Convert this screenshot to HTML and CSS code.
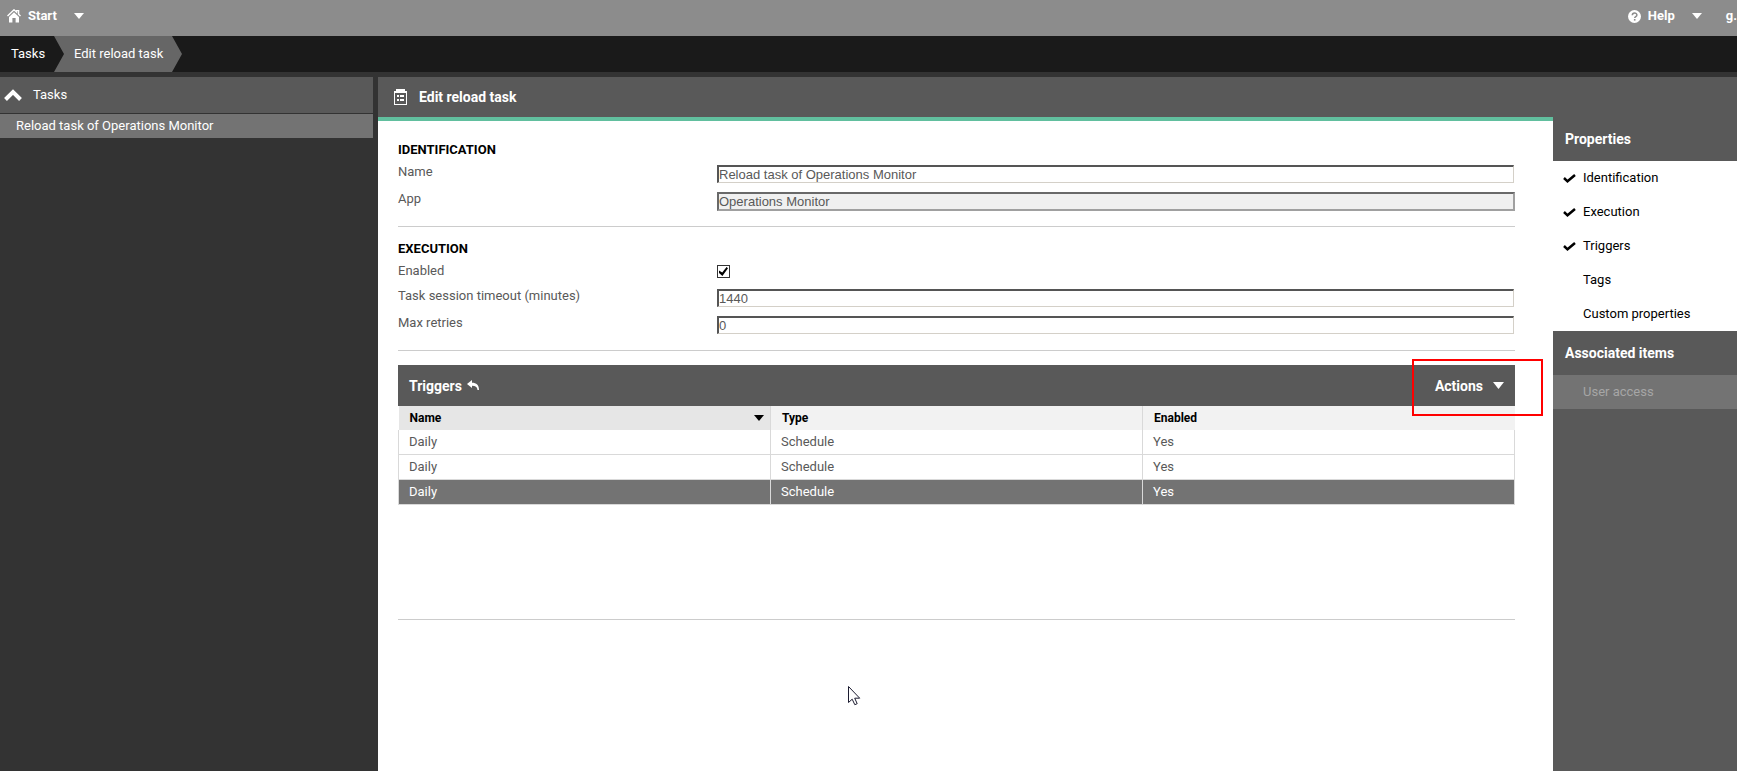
FILE: index.html
```html
<!DOCTYPE html>
<html lang="en">
<head>
<meta charset="utf-8">
<title>Edit reload task</title>
<link rel="stylesheet" href="styles.css">
</head>
<body>
<header class="topbar">
  <button class="menu-button" type="button">
    <svg class="icon-home" width="14" height="14" viewBox="0 0 14 14"><path d="M0.5 7 7 0.8 9.6 3.2V1.6h2v3.6L13.5 7" fill="none" stroke="#fff" stroke-width="1.4"/><path d="M7 3.2 2 8v5.4h3.4V9h3.2v4.4H12V8z" fill="#fff"/></svg>
    <span>Start</span>
    <svg class="caret" width="10" height="6" viewBox="0 0 10 6"><path d="M0 0h10L5 6z" fill="currentColor"/></svg>
  </button>
  <div class="topbar-right">
    <button class="menu-button" type="button">
      <svg class="icon-help" width="13" height="13" viewBox="0 0 13 13"><circle cx="6.500" cy="6.500" r="6.500" fill="#fff"/><path d="M4.300 5.200C4.300 2.300 8.900 2.300 8.900 5c0 1.600-2.200 1.500-2.200 3" fill="none" stroke="#8c8c8c" stroke-width="1.500"/><path d="M5.900 9h1.600v1.600H5.900z" fill="#8c8c8c"/></svg>
      <span>Help</span>
      <svg class="caret" width="10" height="6" viewBox="0 0 10 6"><path d="M0 0h10L5 6z" fill="currentColor"/></svg>
    </button>
    <button class="menu-button user-button" type="button">g.</button>
  </div>
</header>
<nav class="breadcrumb" aria-label="Breadcrumb">
  <a class="crumb crumb-root" href="#">Tasks</a>
  <a class="crumb crumb-current" href="#">Edit reload task</a>
</nav>
<div class="shell">
  <aside class="sidebar">
    <button class="sidebar-head" type="button">
      <svg width="18" height="12" viewBox="0 0 18 12"><path d="M1.500 10.500 9 3l7.500 7.500" fill="none" stroke="#fff" stroke-width="4"/></svg>
      <span>Tasks</span>
    </button>
    <a class="sidebar-item" href="#">Reload task of Operations Monitor</a>
  </aside>
  <main class="workspace">
    <div class="page-head">
      <svg width="13" height="16" viewBox="0 0 13 16"><path d="M0 2h2V0h9v2h2v14H0zM1 4v11h11V4z" fill="#fff" fill-rule="evenodd"/><path d="M3 6h2v2H3zM6 6h4v2H6zM3 10h2v2H3zM6 10h4v2H6z" fill="#fff"/></svg>
      <h1>Edit reload task</h1>
    </div>
    <form class="editor">
      <section class="group">
        <h2>IDENTIFICATION</h2>
        <div class="field"><label for="name">Name</label><input class="text" id="name" type="text" value="Reload task of Operations Monitor"></div>
        <div class="field"><label for="app">App</label><input class="text text-readonly" id="app" type="text" value="Operations Monitor" readonly></div>
      </section>
      <section class="group">
        <h2>EXECUTION</h2>
        <div class="field field-check"><label for="enabled">Enabled</label><input class="check" id="enabled" type="checkbox" checked></div>
        <div class="field"><label for="timeout">Task session timeout (minutes)</label><input class="text" id="timeout" type="text" value="1440"></div>
        <div class="field"><label for="retries">Max retries</label><input class="text" id="retries" type="text" value="0"></div>
      </section>
      <section class="triggers">
        <div class="triggers-head">
          <h3>Triggers</h3>
          <button class="undo" type="button" aria-label="Undo"><svg width="13" height="11" viewBox="0 0 13 11"><path d="M0 4 5 0v2.700c4.500 0 7 2.300 7 7.300h-1.500C10.300 7 8.500 5.700 5 5.700V8z" fill="#fff"/></svg></button>
          <button class="actions" type="button"><span>Actions</span><svg width="11" height="7" viewBox="0 0 11 7"><path d="M0 0h11L5.500 7z" fill="currentColor"/></svg></button>
          <div class="highlight"></div>
        </div>
        <table class="grid">
          <thead><tr>
            <th class="sorted" scope="col"><div class="sort"><span>Name</span><svg width="10" height="6" viewBox="0 0 10 6"><path d="M0 0h10L5 6z"/></svg></div></th>
            <th scope="col">Type</th><th scope="col">Enabled</th>
          </tr></thead>
          <tbody>
            <tr><td>Daily</td><td>Schedule</td><td>Yes</td></tr>
            <tr><td>Daily</td><td>Schedule</td><td>Yes</td></tr>
            <tr class="selected"><td>Daily</td><td>Schedule</td><td>Yes</td></tr>
          </tbody>
        </table>
      </section>
    </form>
    <aside class="panel">
      <h2>Properties</h2>
      <div class="options">
        <button class="option" type="button"><svg width="13" height="9" viewBox="0 0 13 9"><path d="M1 4 4.500 7.300 12 1" fill="none" stroke="#000" stroke-width="2.500"/></svg><span>Identification</span></button>
        <button class="option" type="button"><svg width="13" height="9" viewBox="0 0 13 9"><path d="M1 4 4.500 7.300 12 1" fill="none" stroke="#000" stroke-width="2.500"/></svg><span>Execution</span></button>
        <button class="option" type="button"><svg width="13" height="9" viewBox="0 0 13 9"><path d="M1 4 4.500 7.300 12 1" fill="none" stroke="#000" stroke-width="2.500"/></svg><span>Triggers</span></button>
        <button class="option" type="button"><span>Tags</span></button>
        <button class="option" type="button"><span>Custom properties</span></button>
      </div>
      <h2>Associated items</h2>
      <button class="option option-disabled" type="button" disabled><span>User access</span></button>
    </aside>
  </main>
</div>
<svg class="pointer" width="13" height="20" viewBox="0 0 13 20"><path d="M.5.5v16l3.700-3.300 2.600 5.500 2.400-1-2.500-5.500h5z" fill="#fff" stroke="#1c1c30"/></svg>
</body>
</html>
```
FILE: styles.css
```css
* { box-sizing: border-box; }
body {
  margin: 0;
  min-height: 100vh;
  display: flex;
  flex-direction: column;
  overflow-x: hidden;
  background: #333;
  color: #595959;
  font: 13px/16px Roboto, "Liberation Sans", sans-serif;
}
h1, h2, h3 { margin: 0; font-weight: 700; }
button { border: 0; padding: 0; background: none; color: inherit; font: inherit; text-align: left; }
a { color: inherit; text-decoration: none; }
svg { flex: none; display: block; }

.topbar {
  display: flex;
  justify-content: space-between;
  height: 36px;
  padding: 0 0 4px 7px;
  background: #8c8c8c;
  color: #fff;
}
.topbar-right { display: flex; }
.menu-button { display: flex; align-items: center; gap: 7px; font-weight: 700; }
.menu-button .caret { margin-left: 10px; }
.user-button { margin-left: 24px; }

.breadcrumb { display: flex; height: 36px; background: #1a1a1a; color: #fff; }
.crumb { display: flex; align-items: center; }
.crumb-root { width: 54px; padding-left: 11px; }
.crumb-current {
  width: 128px;
  padding-left: 20px;
  background: #666;
  clip-path: polygon(0 0, 118px 0, 100% 50%, 118px 100%, 0 100%, 10px 50%);
}

.shell { flex: 1; display: grid; grid-template-columns: 373px 1fr; gap: 5px; padding-top: 5px; }
.sidebar { display: flex; flex-direction: column; gap: 1px; color: #fff; }
.sidebar-head { display: flex; align-items: center; gap: 11px; height: 36px; padding-left: 4px; background: #595959; }
.sidebar-item { padding: 4px 16px; background: #737373; }

.workspace {
  display: grid;
  grid-template-columns: 1fr 184px;
  grid-template-rows: 40px 1fr;
  background: #595959;
}
.page-head { grid-column: 1 / 3; display: flex; align-items: center; gap: 12px; padding-left: 16px; color: #fff; }
.page-head h1 { font-size: 14px; }

.editor { border-top: 4px solid #61bf9e; padding: 21px 38px 20px 20px; background: #fff; }
.group { border-bottom: 1px solid #ccc; padding-bottom: 14px; margin-bottom: 14px; }
.group h2 { color: #000; font-size: 13px; line-height: 16px; }
.field { display: grid; grid-template-columns: 319px 1fr; align-items: start; height: 27px; padding-top: 4px; }
.field label { line-height: 20px; }
.field-check { height: 25px; }
.text {
  width: calc(100% - 1px);
  height: 18px;
  margin-top: 3px;
  padding: 0;
  border: 1px solid #d4d0c8;
  border-top: 2px solid #555;
  border-left: 2px solid #555;
  background: #fff;
  color: #595959;
  font: 13px/15px "Liberation Sans", Arial, sans-serif;
}
.text-readonly { width: 100%; height: 19px; border: 2px solid #a0a0a0; border-top-color: #696969; border-left-color: #696969; background: #f0f0f0; }
.check {
  appearance: none;
  width: 13px;
  height: 13px;
  margin: 4px 0 0;
  border: 1px solid #333;
  background: #fff;
  display: grid;
  place-items: center;
}
.check:checked::before {
  content: "";
  width: 9px;
  height: 9px;
  background: #000;
  clip-path: polygon(0 38%, 36% 62%, 84% 0, 100% 14%, 38% 100%, 0 66%);
}

.triggers { min-height: 255px; border-bottom: 1px solid #ccc; }
.triggers-head { position: relative; display: flex; align-items: center; height: 41px; padding: 0 11px; background: #595959; color: #fff; }
.triggers-head h3 { font-size: 14px; }
.undo { margin-left: 5px; }
.actions { display: flex; align-items: center; gap: 10px; margin-left: auto; font-size: 14px; font-weight: 700; }
.highlight { position: absolute; top: -6px; right: -28px; width: 131px; height: 57px; border: 2px solid #f00; }
.grid { width: 100%; table-layout: fixed; border-collapse: collapse; }
.grid th { height: 24px; padding: 0 11px; background: #f2f2f2; color: #000; font-size: 12px; text-align: left; }
.grid .sorted { padding-right: 6px; background: #e6e6e6; border-right: 1px solid #d9d9d9; }
.grid th:nth-child(2) { border-right: 1px solid #d9d9d9; }
.sort { display: flex; align-items: center; justify-content: space-between; }
.grid td { height: 25px; padding: 0 10px; border: 1px solid #d9d9d9; }
.grid tbody tr:first-child td { height: 24px; border-top: 0; }
.selected { background: #737373; color: #fff; }

.panel { background: #595959; color: #fff; }
.panel h2 { height: 44px; padding: 14px 12px; font-size: 14px; line-height: 16px; }
.options { background: #fff; color: #000; }
.option { display: flex; align-items: center; justify-content: flex-end; width: 100%; height: 34px; padding-left: 10px; }
.option span { flex: none; width: 154px; }
.option svg { margin-right: 7px; }
.option-disabled { background: #737373; color: #a6a6a6; }

.pointer { position: absolute; left: 848px; top: 686px; }
```
